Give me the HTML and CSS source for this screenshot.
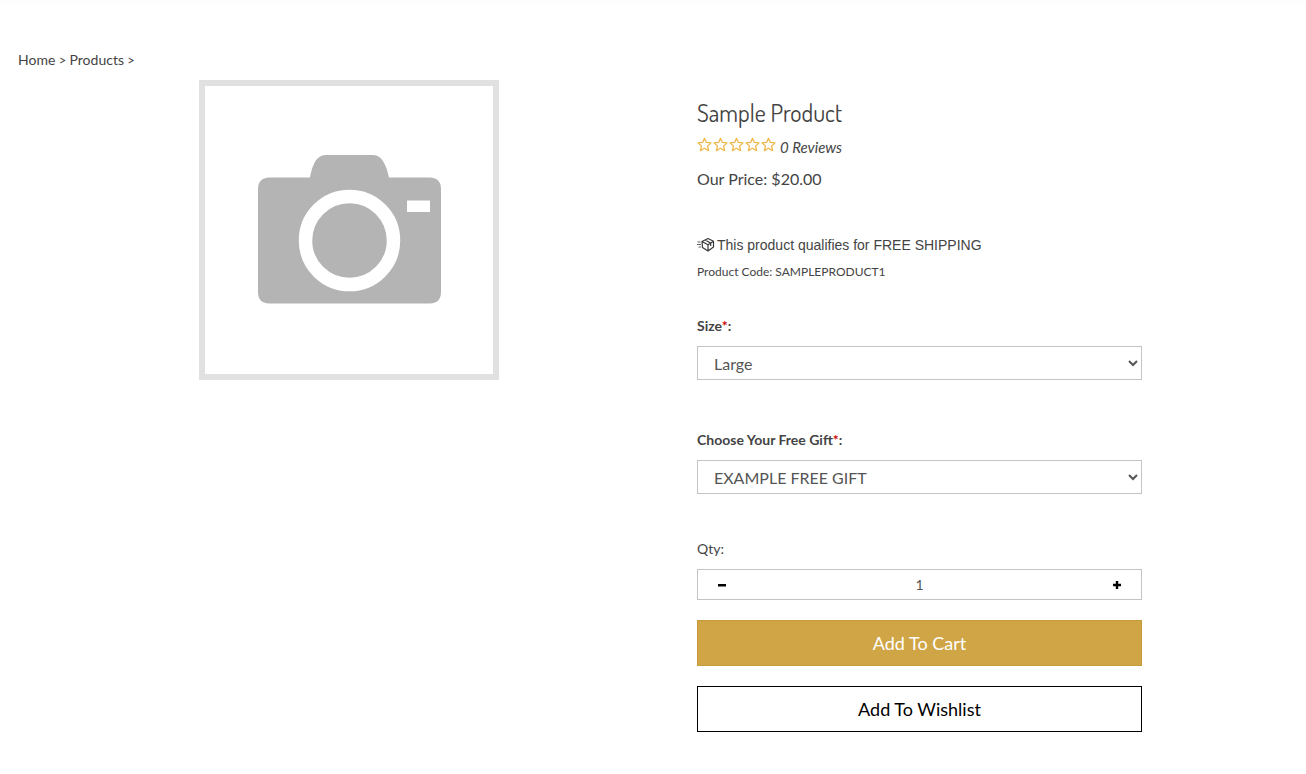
FILE: index.html
```html
<!DOCTYPE html>
<html lang="en">
<head>
<meta charset="utf-8">
<meta name="viewport" content="width=device-width, initial-scale=1">
<title>Sample Product</title>
<link rel="stylesheet" href="styles.css">
</head>
<body>
<nav class="breadcrumb" aria-label="Breadcrumb"><a href="#">Home</a><span class="separator"> &gt; </span><a href="#">Products</a><span class="separator"> &gt;</span></nav>
<main class="product">
  <div class="gallery">
    <svg class="photo" viewBox="0 0 288 288" role="img" aria-label="No photo available">
      <path fill="#b4b4b4" d="M64 91.500H105C107 82 110 69 121 69H168C178 69 182 82 184 91.500H225Q236 92 236 103V206Q236 217 225 217.500H64Q53 217 53 206V103Q53 92 64 91.500Z"/>
      <circle cx="144.500" cy="154.500" r="44" fill="none" stroke="#fff" stroke-width="13.500"/>
      <path fill="#fff" d="M202 114.500h23v11.500h-23z"/>
    </svg>
  </div>
  <form class="details">
    <h1 class="title">Sample Product</h1>
    <div class="rating">
      <svg class="stars" viewBox="0 0 80 16" role="img" aria-label="0 out of 5 stars">
        <defs><path id="star" d="M7.500 1.200l1.900 4.200 4.600.5-3.400 3.200 1 4.600-4.100-2.400-4.100 2.400 1-4.600L1 5.900l4.600-.5z"/></defs>
        <g fill="none" stroke="#efb64a" stroke-width="1.300" stroke-linejoin="round">
          <use href="#star"/><use href="#star" x="16"/><use href="#star" x="32"/><use href="#star" x="48"/><use href="#star" x="64"/>
        </g>
      </svg>
      <a class="reviews" href="#">0 Reviews</a>
    </div>
    <p class="price">Our Price: $20.00</p>
    <p class="shipping">
      <svg class="box" viewBox="0 0 18 16" aria-hidden="true">
        <g fill="none" stroke="#3a3a3a" stroke-width="1.200" stroke-linejoin="round">
          <path d="M5 4.500L11 1.500l5.500 2.800v5.700L11 14l-5.500-3.500zM5 4.500l6 3.300 5.500-3.500M11 7.800V14M8 3l5.700 3v3"/>
          <path d="M.5 5h3M0 7.500h4M1.500 10h2.500" stroke-width=".8"/>
        </g>
      </svg>
      <span>This product qualifies for FREE SHIPPING</span>
    </p>
    <p class="code">Product Code: SAMPLEPRODUCT1</p>
    <div class="field">
      <label class="label" for="size">Size<span class="required">*</span>:</label>
      <select class="select" id="size"><option>Large</option></select>
    </div>
    <div class="field">
      <label class="label" for="gift">Choose Your Free Gift<span class="required">*</span>:</label>
      <select class="select" id="gift"><option>EXAMPLE FREE GIFT</option></select>
    </div>
    <label class="qty-label" for="qty">Qty:</label>
    <div class="stepper">
      <button class="step" type="button" aria-label="Decrease quantity"><svg class="sign" viewBox="0 0 8 8"><path d="M0 3h8v2.500H0z"/></svg></button>
      <input class="qty" id="qty" type="text" value="1">
      <button class="step" type="button" aria-label="Increase quantity"><svg class="sign" viewBox="0 0 8 8"><path d="M0 2.800h2.800V0h2.400v2.800H8v2.400H5.200V8H2.800V5.200H0z"/></svg></button>
    </div>
    <button class="button cart" type="button">Add To Cart</button>
    <button class="button wishlist" type="button">Add To Wishlist</button>
  </form>
</main>
</body>
</html>
```
FILE: styles.css
```css
* { box-sizing: border-box; }

body {
  margin: 0;
  padding: 45px 18px 40px;
  border-top: 5px solid #fdfdfd;
  background: #fff;
  color: #444;
  font: 14px/20px Lato, sans-serif;
}

a { color: inherit; text-decoration: none; }
h1, p { margin: 0; }

.separator { font-size: 13px; line-height: 1; }

.product {
  display: grid;
  grid-template-columns: 662fr 445fr 129fr;
  column-gap: 17px;
  padding-top: 10px;
}

.gallery { display: flex; justify-content: center; align-items: flex-start; }

.photo {
  width: 300px;
  border: 6px solid #e1e1e1;
}

.details { display: flex; flex-direction: column; padding-top: 18px; }

.title { font: 400 24px/30px Dosis, Lato, sans-serif; }

.rating { display: flex; align-items: center; gap: 3px; margin-top: 8px; }
.stars { width: 80px; height: 20px; padding-bottom: 4px; }
.reviews { font-size: 15px; font-style: italic; line-height: 22px; }

.price { margin-top: 10px; font-size: 16px; line-height: 22px; }

.shipping {
  display: flex;
  align-items: center;
  gap: 2px;
  margin-top: 44px;
  font-family: "Liberation Sans", Arial, sans-serif;
  line-height: 22px;
}
.box { width: 18px; height: 16px; }

.code { margin-top: 6px; font-size: 12px; }

.field { display: flex; flex-direction: column; gap: 10px; margin-bottom: 50px; }
.code + .field { margin-top: 34px; }
.label { font-weight: 700; }
.required { color: #c00; }

.select {
  width: 100%;
  height: 34px;
  padding: 6px 12px;
  border: 1px solid #c4c4c4;
  border-radius: 0;
  background: #fff;
  color: #555;
  font: 16px/20px Lato, sans-serif;
}

.qty-label { margin-bottom: 10px; margin-top: -5px; }

.stepper {
  display: flex;
  height: 31px;
  margin-bottom: 20px;
  border: 1px solid #c4c4c4;
}
.step {
  display: grid;
  place-items: center;
  flex: none;
  width: 48px;
  padding: 0;
  border: 0;
  background: none;
}
.sign { width: 8px; height: 8px; fill: #000; }
.qty {
  flex: 1;
  min-width: 0;
  padding: 0;
  border: 0;
  background: none;
  color: #555;
  font: 14px/20px Lato, sans-serif;
  text-align: center;
}

.button {
  height: 46px;
  border: 1px solid #000;
  background: #fff;
  color: #000;
  font: 18px/24px Lato, sans-serif;
}
.cart { margin-bottom: 20px; border-color: #c79a3b; background: #d0a545; color: #fff; }
```
